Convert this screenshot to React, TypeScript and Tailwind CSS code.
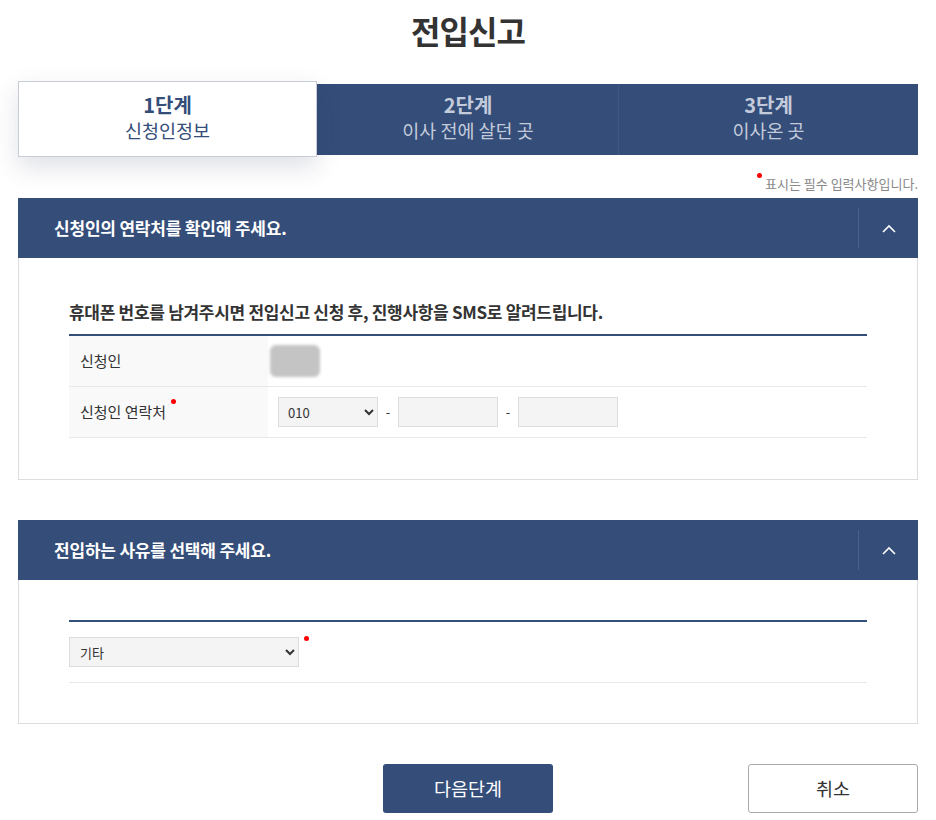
import React, { useState } from "react";

const NAVY = "bg-[#344d79]";

const RequiredDot: React.FC<{ className?: string }> = ({ className = "" }) => (
  <span className={`inline-block w-[5px] h-[5px] rounded-full bg-[#ff0000] ${className}`} />
);

const SectionHeader: React.FC<{ title: string }> = ({ title }) => (
  <div className={`${NAVY} h-[60px] flex items-center`}>
    <h2 className="flex-1 pl-[36px] text-[17px] font-bold text-white tracking-[-0.2px]">
      {title}
    </h2>
    <div className="w-px h-[40px] bg-[#48608b]" />
    <button className="w-[59px] h-[60px] flex items-center justify-center">
      <svg width="14" height="9" viewBox="0 0 14 9" fill="none">
        <path d="M1 8L7 2l6 6" stroke="#fff" strokeWidth="1.6" />
      </svg>
    </button>
  </div>
);

const steps = [
  { no: "1단계", label: "신청인정보" },
  { no: "2단계", label: "이사 전에 살던 곳" },
  { no: "3단계", label: "이사온 곳" },
];

const App: React.FC = () => {
  const [prefix, setPrefix] = useState<string>("010");
  const [reason, setReason] = useState<string>("기타");

  return (
    <div className="w-[936px] bg-white text-[#333] font-['Noto_Sans_CJK_KR','Noto_Sans',sans-serif]">
      <div className="w-[900px] mx-auto">
        <h1 className="h-[60px] flex items-center justify-center text-[32px] font-bold text-[#333] tracking-[-1px]">
          전입신고
        </h1>

        {/* 단계 */}
        <div className={`mt-[24px] grid grid-cols-3 ${NAVY}`}>
          {steps.map((s, i) =>
            i === 0 ? (
              <div
                key={s.no}
                className="h-[76px] -mt-[3px] -mb-[2px] pb-[4px] bg-white border border-[#c8ccd6] shadow-[0_10px_24px_rgba(40,50,80,0.15)] flex flex-col items-center justify-center text-[#344d79] relative z-10 w-[299px]"
              >
                <span className="text-[20px] font-bold leading-[25px]">{s.no}</span>
                <span className="text-[18.5px] leading-[26px]">{s.label}</span>
              </div>
            ) : (
              <div
                key={s.no}
                className={`h-[71px] pb-[4px] flex flex-col items-center justify-center text-[#c3cbdb] ${
                  i === 2 ? "border-l border-[#3f5784]" : ""
                }`}
              >
                <span className="text-[20px] font-bold leading-[25px]">{s.no}</span>
                <span className="text-[18.5px] leading-[26px]">{s.label}</span>
              </div>
            )
          )}
        </div>

        <p className="mt-[16px] h-[27px] flex items-start justify-end text-[13px] text-[#888] pt-[3px]">
          <RequiredDot className="mr-[3px] mt-[-1px]" />
          표시는 필수 입력사항입니다.
        </p>

        {/* 연락처 */}
        <section>
          <SectionHeader title="신청인의 연락처를 확인해 주세요." />
          <div className="border border-t-0 border-[#ddd] px-[50px] pt-[42px] pb-[41px]">
            <h3 className="text-[17px] font-bold leading-[24px] tracking-[-0.3px] mb-[10px]">
              휴대폰 번호를 남겨주시면 전입신고 신청 후, 진행사항을 SMS로 알려드립니다.
            </h3>
            <div className="border-t-2 border-[#344d79]">
              <div className="flex h-[51px] border-b border-[#e8e8e8]">
                <div className="w-[199px] bg-[#f9f9f9] pl-[11px] flex items-center text-[15px]">
                  신청인
                </div>
                <div className="flex-1 flex items-center pl-[2px]">
                  <div className="w-[50px] h-[32px] bg-[#c4c4c4] rounded-[6px] blur-[1.5px]" />
                </div>
              </div>
              <div className="flex h-[51px] border-b border-[#e8e8e8]">
                <div className="w-[199px] bg-[#f9f9f9] pl-[11px] flex items-center text-[15px]">
                  신청인 연락처
                  <RequiredDot className="ml-[5px] mb-[22px]" />
                </div>
                <div className="flex-1 flex items-center pl-[10px] text-[13px]">
                  <select
                    value={prefix}
                    onChange={(e) => setPrefix(e.target.value)}
                    className="w-[100px] h-[30px] bg-[#f4f4f4] border border-[#ddd] pl-[5px] text-[13px] text-[#333]"
                  >
                    <option>010</option>
                    <option>011</option>
                    <option>016</option>
                    <option>017</option>
                    <option>018</option>
                    <option>019</option>
                  </select>
                  <span className="w-[20px] text-center">-</span>
                  <input className="w-[100px] h-[30px] bg-[#f4f4f4] border border-[#ddd]" />
                  <span className="w-[20px] text-center">-</span>
                  <input className="w-[100px] h-[30px] bg-[#f4f4f4] border border-[#ddd]" />
                </div>
              </div>
            </div>
          </div>
        </section>

        {/* 사유 */}
        <section className="mt-[40px]">
          <SectionHeader title="전입하는 사유를 선택해 주세요." />
          <div className="border border-t-0 border-[#ddd] px-[50px] pt-[40px] pb-[40px]">
            <div className="border-t-2 border-[#344d79]">
              <div className="flex items-start h-[61px] pt-[15px] border-b border-[#e8e8e8]">
                <select
                  value={reason}
                  onChange={(e) => setReason(e.target.value)}
                  className="w-[230px] h-[30px] bg-[#f4f4f4] border border-[#ddd] pl-[6px] text-[13px] text-[#333]"
                >
                  <option>기타</option>
                  <option>직장</option>
                  <option>가족</option>
                  <option>주택</option>
                  <option>교육</option>
                </select>
                <RequiredDot className="ml-[5px] mt-[-1px]" />
              </div>
            </div>
          </div>
        </section>

        {/* 버튼 */}
        <div className="mt-[40px] grid grid-cols-[1fr_170px_1fr] items-center pb-[8px]">
          <div />
          <button className={`h-[49px] ${NAVY} text-white text-[18.5px] rounded-[3px]`}>
            다음단계
          </button>
          <button className="justify-self-end w-[170px] h-[49px] bg-white border border-[#aaa] text-[18.5px] text-[#333] rounded-[3px]">
            취소
          </button>
        </div>
      </div>
    </div>
  );
};

export default App;
